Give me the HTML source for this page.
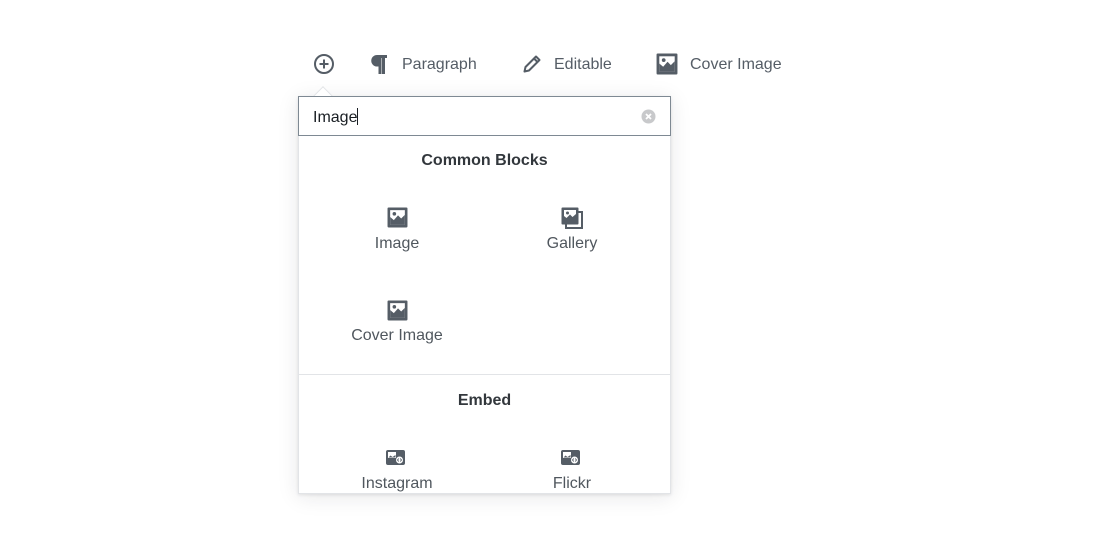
<!DOCTYPE html>
<html><head><meta charset="utf-8"><style>
*{margin:0;padding:0;box-sizing:border-box}
body{width:1099px;height:557px;background:#fff;font-family:"Liberation Sans",sans-serif;color:#555d66;position:relative;overflow:hidden}
.a{position:absolute}
.t{font-size:16px;color:#555d66}
.lbl{position:absolute;font-size:16px;color:#50575e;text-align:center;width:150px}
.h{position:absolute;font-size:16px;font-weight:bold;color:#32373c;text-align:center;width:371px;left:299px}
</style></head><body>
<svg class="a" style="left:313px;top:53px" width="22" height="22" viewBox="0 0 22 22"><circle cx="11" cy="11" r="9" fill="none" stroke="#555d66" stroke-width="2"/><path d="M11 6.5v9M6.5 11h9" stroke="#555d66" stroke-width="2"/></svg>
<svg class="a" style="left:371px;top:55px" width="16" height="19" viewBox="0 0 16 19"><path d="M6 0h10v3h-2V19h-3V3H10.5V19h-3V11.5H6a5.75 5.75 0 0 1 0-11.5z" fill="#555d66"/></svg>
<div class="a t" style="left:402px;top:56px">Paragraph</div>
<svg class="a" style="left:523px;top:55px" width="18" height="18" viewBox="0 0 18 18"><path d="M13 1.5l3.5 3.5L6 15.5 1.5 16.5 2.5 12z" fill="none" stroke="#555d66" stroke-width="2" stroke-linejoin="round"/><path d="M11 3.5l3.5 3.5" stroke="#555d66" stroke-width="2"/></svg>
<div class="a t" style="left:554px;top:56px">Editable</div>
<svg class="a" style="left:656px;top:53px" width="22" height="22" viewBox="0 0 20 20"><rect x="0.5" y="0.5" width="19" height="19" rx="1" fill="#555d66"/><rect x="3" y="3" width="14" height="14" fill="#fff"/><path d="M3 9.5l3.5 3 4-4.5 3 3 3.5-3.5V17H3z" fill="#555d66"/><circle cx="7" cy="6.5" r="1.7" fill="#555d66"/></svg>
<div class="a t" style="left:690px;top:56px">Cover Image</div>
<div class="a" style="left:298px;top:96px;width:373px;height:398px;border:1px solid #e2e4e7;box-shadow:0 3px 20px rgba(25,30,35,.1),0 1px 3px rgba(25,30,35,.1);background:#fff"></div>
<div class="a" style="left:316px;top:89px;width:14px;height:14px;background:#fff;border-left:1px solid #e2e4e7;border-top:1px solid #e2e4e7;transform:rotate(45deg)"></div>
<div class="a" style="left:298px;top:96px;width:373px;height:40px;border:1px solid #7e8993;background:#fff"></div>
<div class="a" style="left:313px;top:108px;font-size:16px;color:#191e23">Image<span style="display:inline-block;width:1px;height:17px;background:#191e23;vertical-align:-3px"></span></div>
<svg class="a" style="left:641px;top:109px" width="15" height="15" viewBox="0 0 15 15"><circle cx="7.5" cy="7.5" r="7" fill="#c8c9cb"/><path d="M5 5l5 5M10 5l-5 5" stroke="#fff" stroke-width="1.8"/></svg>
<div class="h" style="top:152px">Common Blocks</div>
<svg class="a" style="left:387px;top:207px" width="21" height="21" viewBox="0 0 20 20"><rect x="0.5" y="0.5" width="19" height="19" rx="1" fill="#555d66"/><rect x="3" y="3" width="14" height="14" fill="#fff"/><path d="M3 9.5l3.5 3 4-4.5 3 3 3.5-3.5V17H3z" fill="#555d66"/><circle cx="7" cy="6.5" r="1.7" fill="#555d66"/></svg>
<div class="lbl" style="left:322px;top:235px">Image</div>
<svg class="a" style="left:561px;top:207px" width="23" height="23" viewBox="0 0 23 23"><path d="M5 5h16v16H5z" fill="none" stroke="#555d66" stroke-width="2"/><rect x="0.5" y="0.5" width="17" height="17" rx="1" fill="#555d66"/><rect x="3" y="3" width="12" height="12" fill="#fff"/><path d="M3 9l2.5 2 3.5-3.5 2.5 2.5 3.5-3V15H3z" fill="#555d66"/><circle cx="6.5" cy="6" r="1.5" fill="#555d66"/></svg>
<div class="lbl" style="left:497px;top:235px">Gallery</div>
<svg class="a" style="left:387px;top:300px" width="21" height="21" viewBox="0 0 20 20"><rect x="0.5" y="0.5" width="19" height="19" rx="1" fill="#555d66"/><rect x="3" y="3" width="14" height="14" fill="#fff"/><path d="M3 9.5l3.5 3 4-4.5 3 3 3.5-3.5V17H3z" fill="#555d66"/><circle cx="7" cy="6.5" r="1.7" fill="#555d66"/></svg>
<div class="lbl" style="left:322px;top:327px">Cover Image</div>
<div class="a" style="left:299px;top:374px;width:371px;height:1px;background:#e2e4e7"></div>
<div class="h" style="top:392px">Embed</div>
<svg class="a" style="left:386px;top:450px" width="19" height="15" viewBox="0 0 19 15"><rect x="0" y="0" width="19" height="15" rx="2" fill="#555d66"/><rect x="2" y="2" width="8" height="6" fill="#fff"/><path d="M2.5 7.5l2-2 2 1.5 3-2v2.5z" fill="#555d66"/><circle cx="13.5" cy="10" r="3.5" fill="#fff"/><path d="M12.8 8.5l-1.3 1.5 1.3 1.5M14.2 8.5l1.3 1.5-1.3 1.5" stroke="#555d66" stroke-width=".9" fill="none"/></svg>
<div class="lbl" style="left:322px;top:475px">Instagram</div>
<svg class="a" style="left:561px;top:450px" width="19" height="15" viewBox="0 0 19 15"><rect x="0" y="0" width="19" height="15" rx="2" fill="#555d66"/><rect x="2" y="2" width="8" height="6" fill="#fff"/><path d="M2.5 7.5l2-2 2 1.5 3-2v2.5z" fill="#555d66"/><circle cx="13.5" cy="10" r="3.5" fill="#fff"/><path d="M12.8 8.5l-1.3 1.5 1.3 1.5M14.2 8.5l1.3 1.5-1.3 1.5" stroke="#555d66" stroke-width=".9" fill="none"/></svg>
<div class="lbl" style="left:497px;top:475px">Flickr</div>
</body></html>
